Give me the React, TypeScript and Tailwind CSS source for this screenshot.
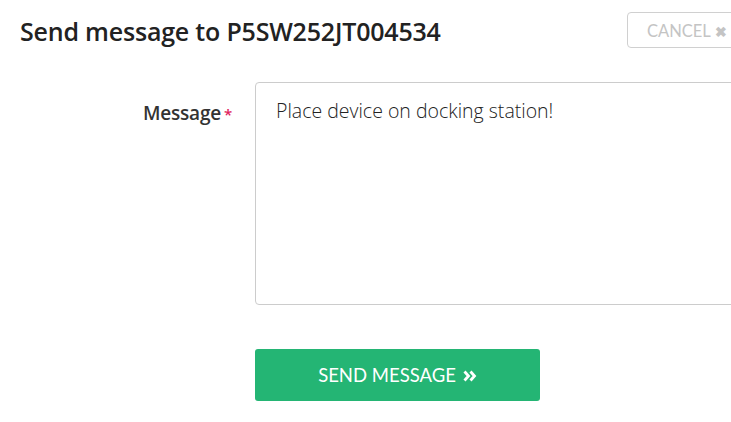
export default function App() {
  return (
    <div className="w-[731px] h-[422px] overflow-hidden bg-white font-['Lato',sans-serif] text-[#222]">
      <div className="w-[780px]">
        <div className="flex items-start justify-between pt-3 pl-5">
          <h1 className="pt-[3px] font-['Open_Sans',sans-serif] text-[25px] font-semibold leading-[32px] tracking-[-0.2px] text-[#222]">
            Send message to P5SW252JT004534
          </h1>
          <button className="flex h-[36px] w-[153px] items-center rounded border border-[#d0d0d0] bg-white pl-[19px] pt-[3px] text-[16.5px] text-[#c4c4c4]">
            CANCEL
            <span className="ml-[4px] text-[14px] font-bold">✖</span>
          </button>
        </div>

        <div className="mt-[34px] flex items-start">
          <label className="flex w-[232px] items-baseline justify-end pt-[17px] font-['Open_Sans',sans-serif] text-[19px] font-semibold tracking-[-0.2px] text-[#333]">
            Message
            <span className="ml-[3px] text-[15px] text-[#e0245e]">*</span>
          </label>
          <textarea
            className="ml-[23px] h-[223px] w-[520px] resize-none rounded border border-[#cccccc] px-[20px] py-[14px] font-['Open_Sans',sans-serif] text-[19.5px] font-light leading-[28px] text-[#222] outline-none"
            defaultValue="Place device on docking station!"
          />
        </div>

        <div className="mt-[44px] pl-[255px]">
          <button className="flex h-[52px] w-[285px] items-center justify-center gap-[7px] rounded-[3px] bg-[#24b574] pt-[1px] text-[18.5px] text-white">
            SEND MESSAGE
            <svg width="14" height="12" viewBox="0 0 14 12" className="mt-[1px]">
              <path d="M1.5 1.5 L5.5 6 L1.5 10.5 M7.5 1.5 L11.5 6 L7.5 10.5" fill="none" stroke="white" strokeWidth="2.8" strokeLinecap="butt" strokeLinejoin="miter" />
            </svg>
          </button>
        </div>
      </div>
    </div>
  );
}
